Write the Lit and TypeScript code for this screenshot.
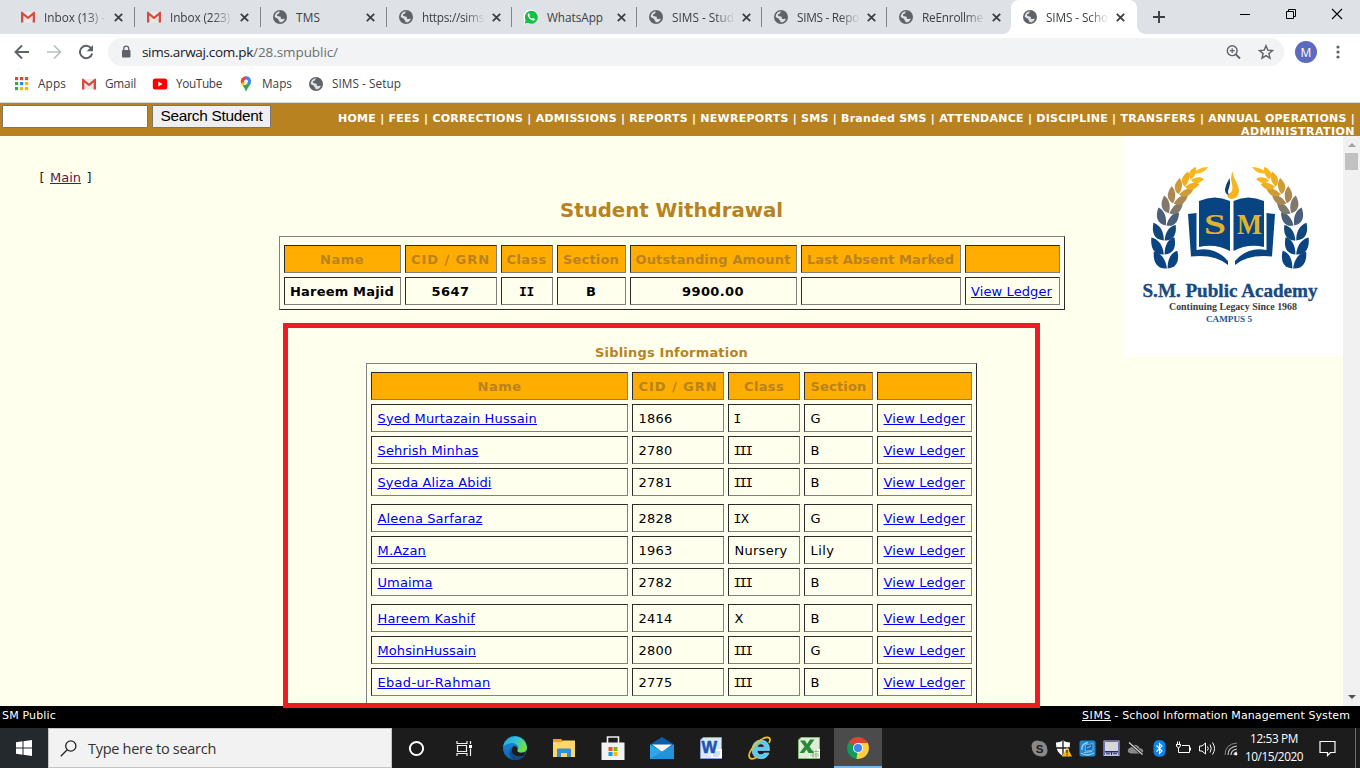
import { LitElement, html, svg, css } from "lit";
import { customElement, property } from "lit/decorators.js";

/** Text run whose tracking is adjusted so that it fills a given width. */
@customElement("fit-text")
class FitText extends LitElement {
  @property({ type: Number }) w = 0;
  static styles = css`
    :host { display: inline-block; white-space: pre; text-decoration: inherit; }
  `;
  render() { return html`<slot></slot>`; }
  firstUpdated() {
    const n = (this.textContent || "").length;
    const cur = this.getBoundingClientRect().width;
    if (n && cur && this.w) this.style.letterSpacing = `${(this.w - cur) / n}px`;
  }
}

const fit = (text: string, w: number) => html`<fit-text .w=${w}>${text}</fit-text>`;

const icon = (w: number, h: number, vb: string, body: unknown) =>
  html`<svg width=${w} height=${h} viewBox=${vb} fill="none">${body}</svg>`;

const globe = () => icon(16, 16, "0 0 16 16", svg`
  <circle cx="8" cy="8" r="7" fill="#5f6368"/>
  <path d="M8.6 2.3C7 3 7.600 4.200 6.500 4.800C5.500 5.300 4.700 5.200 5 6.500C5.200 7.500 7.600 7 8.500 7.800C9.300 8.500 8.300 9.400 9.300 9.900C10.500 10.400 11.300 9.300 12.800 9.900A5.300 5.300 0 0 1 7.400 13.300C8 12 6.500 11.600 6.300 10.600C6 9.300 4.300 9.200 2.700 8A5.400 5.400 0 0 1 8.600 2.300Z" fill="#dee1e6"/>`);

const gmail = () => icon(16, 16, "0 0 16 16", svg`
  <path d="M2 3H14V13.500H2Z" fill="#eceae8"/>
  <path d="M2 13.500L6.500 9M14 13.500L9.500 9" stroke="#cfcdcb" stroke-width=".8"/>
  <path d="M1 3.200Q1 2.500 1.900 2.500L8 7.500L14.100 2.500Q15 2.500 15 3.200V13.500H12.700V6.400L8 10.200L3.300 6.400V13.500H1Z" fill="#d54b3d"/>`);

const whatsapp = () => icon(16, 16, "0 0 16 16", svg`
  <path d="M.6 15.700L1.400 11.500A7.300 7.300 0 1 1 5 14.600Z" fill="#fff"/>
  <path d="M1.600 14.800L2.600 11.300A6.500 6.500 0 1 1 5 13.800Z" fill="#12c143"/>
  <path d="M5.500 4.300Q4 5.500 5 7.500Q6.800 11 10 11.700Q11.700 11.500 12 10L10 8.800L9.100 9.800Q7.200 9 6.300 7.100L7 6.200L6.300 4.400Z" fill="#fff"/>`);

const close = () => icon(9, 9, "0 0 9 9", svg`<path d="M.8.8L8.200 8.200M8.200.8L.8 8.200" stroke="#3c4043" stroke-width="1.8"/>`);

const TABS = [
  { ic: gmail, t: "Inbox (13) -", w: 61 },
  { ic: gmail, t: "Inbox (223)", w: 60 },
  { ic: globe, t: "TMS", w: 24 },
  { ic: globe, t: "https://sims", w: 62 },
  { ic: whatsapp, t: "WhatsApp", w: 56 },
  { ic: globe, t: "SIMS - Stud", w: 62 },
  { ic: globe, t: "SIMS - Repo", w: 62 },
  { ic: globe, t: "ReEnrollme", w: 61 },
  { ic: globe, t: "SIMS - Scho", w: 62 },
];

const SUMMARY = [
  ["Name", 44, "Hareem Majid", 104],
  ["CID / GRN", 79, "5647", 38],
  ["Class", 40, "II", 15],
  ["Section", 56, "B", 10],
  ["Outstanding Amount", 155, "9900.00", 62],
  ["Last Absent Marked", 147, "", 0],
] as [string, number, string, number][];

type Row = [string, number, string, string, number, string, number];
const SIBLINGS: Row[][] = [
  [
    ["Syed Murtazain Hussain", 159.500, "1866", "I", 5.5, "G", 10],
    ["Sehrish Minhas", 101, "2780", "III", 17.5, "B", 9],
    ["Syeda Aliza Abidi", 114, "2781", "III", 17.5, "B", 9],
  ],
  [
    ["Aleena Sarfaraz", 105, "2828", "IX", 15, "G", 10],
    ["M.Azan", 48.5, "1963", "Nursery", 53, "Lily", 24],
    ["Umaima", 55, "2782", "III", 17.5, "B", 9],
  ],
  [
    ["Hareem Kashif", 97.500, "2414", "X", 9, "B", 9],
    ["MohsinHussain", 98.500, "2800", "III", 17.5, "G", 10],
    ["Ebad-ur-Rahman", 113, "2775", "III", 17.5, "B", 9],
  ],
];

const isRoman = (s: string) => /^I[IX]*$/.test(s);

/* Laurel leaf pairs: base x, base y, rotation, scale, colour */
const LEAVES: [number, number, number, number, string][] = [
  [44, 132, -4, 1, "#0b4480"],
  [41, 118, -3, 0.98, "#0b4480"],
  [41, 104, 3, 0.95, "#12477c"],
  [43, 89, 11, 0.9, "#4c5f7a"],
  [46, 77, 19, 0.86, "#81796c"],
  [50.500, 67, 28, 0.8, "#a98853"],
  [56, 58, 37, 0.76, "#cf9b35"],
  [62, 50.500, 46, 0.72, "#efad20"],
  [68, 43.500, 54, 0.64, "#fab71c"],
];

const laurel = () => svg`${LEAVES.map(([x, y, r, s, c]) => svg`
  <g transform="translate(${x} ${y}) rotate(${r}) scale(${s})" fill=${c}>
    <path d="M-.2 .5C-11 .5 -13.500 -8 -12 -17.500C-5 -15.500 -.5 -9 -.2 .5Z"/>
    <path d="M.6 .5C10.500 .5 13 -7.500 11.500 -16.500C5 -15 1 -9 .6 .5Z"/>
  </g>`)}<path d="M71 37.500Q74 31.500 85 31Q80 38.500 71 37.500Z" fill="#fcbb20"/>`;

const crest = () => html`<svg class="crest" width="220" height="220" viewBox="0 0 220 220">
  <rect width="220" height="220" fill="#fff"/>
  <g>${laurel()}</g>
  <g transform="translate(214 0) scale(-1 1)">${laurel()}</g>
  <path d="M109.500 35C110 43 116 48 116 55Q115 63 108 63Q103 62 105 58Q111 56 109 48Q107 42 109.500 35Z" fill="#f8b41d"/>
  <path d="M106.500 42Q108 47 106 52Q104 56 106 59Q101.500 58 102 53Q103 48 106.500 42Z" fill="#123f76"/>
  <g fill="#084482">
    <path d="M76 65Q92 58 107 65V115Q92 107 76 111Z"/>
    <path d="M110.500 65Q125 58 141 65V111Q125 107 110.500 115Z"/>
    <path d="M65 78L73.500 77V114Q92 110 105 125V129Q92 118 68 120.500Z"/>
    <path d="M152 78L143.500 77V114Q125 110 112 125V129Q125 118 149 120.500Z"/>
  </g>
  <g class="crest-text">
    <text x="81" y="98" font-size="29" textLength="22" lengthAdjust="spacingAndGlyphs" fill="#e2b22e">S</text>
    <text x="114" y="98" font-size="29" textLength="25" lengthAdjust="spacingAndGlyphs" fill="#e2b22e">M</text>
    <text x="19.500" y="160.500" font-size="19" textLength="175" lengthAdjust="spacingAndGlyphs" fill="#174a80" stroke="#174a80" stroke-width=".35">S.M. Public Academy</text>
    <text x="46" y="173.700" font-size="9.500" textLength="128" lengthAdjust="spacingAndGlyphs" fill="#3a3a3c">Continuing Legacy Since 1968</text>
    <text x="83" y="186.200" font-size="8.500" textLength="46" lengthAdjust="spacingAndGlyphs" fill="#1e568c">CAMPUS 5</text>
  </g>
</svg>`;

const APPS = [
  icon(24, 24, "0 0 24 24", svg`
    <defs>
      <linearGradient id="ea" x1="0" y1="0" x2="1" y2=".5"><stop offset="0" stop-color="#1b9de2"/><stop offset=".5" stop-color="#33c3d8"/><stop offset="1" stop-color="#6fe23f"/></linearGradient>
      <linearGradient id="eb" x1="0" y1="0" x2="0" y2="1"><stop offset="0" stop-color="#1b8fdc"/><stop offset="1" stop-color="#0f62b4"/></linearGradient>
    </defs>
    <circle cx="12" cy="12" r="12" fill="url(#eb)"/>
    <path d="M.2 10.500A12 12 0 0 1 24 11.500C24 15 21 16.700 18 16.700Q14 16.500 14.300 14.600Q15.800 13 15.300 10.800Q13.500 7 9 7Q3 7.200.2 10.500Z" fill="url(#ea)"/>
    <path d="M14.300 14.600Q14 16.500 18 16.700Q21 16.700 23 15.200Q22.500 17.500 20.500 20Q13 22 9.500 17.500Q7.500 13.500 10.500 10Q15 10 14.300 14.600Z" fill="#1c1c1c"/>
    <path d="M8.800 11Q7.500 18 13 20.500Q17 22 20.500 20A12 12 0 0 1 11 24Q3.500 20 8.800 11Z" fill="#114a8b"/>`),
  icon(22, 20, "0 0 22 20", svg`
    <path d="M0 1H8L10 3H22V19H0Z" fill="#e9a50c"/><path d="M0 4H8.500L10 2.500H22V19H0Z" fill="#ffd767"/>
    <path d="M4 19V11.500Q4 10.500 5 10.500H17Q18 10.500 18 11.500V19H14V15H8V19Z" fill="#2f8fd8"/>`),
  icon(24, 24, "0 0 24 24", svg`
    <path d="M6.500 7V1H17.500V7" stroke="#eee" stroke-width="1.600"/><path d="M.5 6.500H23.500V24H.5Z" fill="#f2f2f2"/>
    <path d="M7.500 11H11.500V15H7.500Z" fill="#f25022"/><path d="M12.500 11H16.500V15H12.500Z" fill="#7fba00"/>
    <path d="M7.500 16H11.500V20H7.500Z" fill="#00a4ef"/><path d="M12.500 16H16.500V20H12.500Z" fill="#ffb900"/>`),
  icon(24, 24, "0 0 24 24", svg`
    <path d="M0 8.500L12 1L24 8.500V14H0Z" fill="#0b5cab"/>
    <path d="M0 8.500L12 15.500L24 8.500V23H0Z" fill="#29a9ea"/><path d="M0 23L12 15.500L24 8.500V23Z" fill="#1e93e0"/><path d="M2 8.500H22L13 15Q12 15.600 11 15Z" fill="#f6f6f6"/>`),
  icon(22, 22, "0 0 22 22", svg`
    <path d="M3 .5H21.500V21.500H.5V3Z" fill="#dce8f8" stroke="#7fa3d6"/><path d="M17 12H22V21H11V17Z" fill="#fff"/>
    <path d="M13 15H20M13 17H20M13 19H19" stroke="#8eaddb" stroke-width=".8"/>
    <text x="1.500" y="15.500" font-family="Liberation Sans" font-weight="700" font-size="16.500" fill="#1e52b0" stroke="#1e52b0" stroke-width=".5">W</text>`),
  icon(24, 24, "0 0 24 24", svg`
    <path d="M21.500 14.500H9Q9.500 18.700 13 18.700Q15.200 18.700 16.200 17H21Q19 22.700 13 22.700Q4 22.500 4 13.500Q4.500 4.500 13 4Q21.800 4.500 21.500 14.500ZM9.200 11.200H16.600Q16 7.800 13 7.800Q9.800 7.800 9.200 11.200Z" fill="#5cc9f5" stroke="#a7e4fb" stroke-width=".6"/>
    <path d="M21 7Q23.500 2 20 1.500Q14 1 6 10Q-1 18.500 2 22Q4 24 9 21" stroke="#f0c11c" stroke-width="1.800"/>`),
  icon(22, 22, "0 0 22 22", svg`
    <path d="M3 .5H21.500V21.500H.5V3Z" fill="#dcedd8" stroke="#85b878"/><path d="M11 12H22V21H11Z" fill="#fff"/>
    <path d="M12 14.500H21M12 17H21M12 19H21M15 12V21M18 12V21" stroke="#6aa95c" stroke-width=".7"/>
    <path d="M2 3.500H7L9 7L12 2.500H16.500L11.500 9.500L16 16H10.500L8.500 12.500L6 16H1.500L6.500 9.500Z" fill="#2b8a35"/>`),
];

const chrome = icon(22, 22, "0 0 22 22", svg`
  <path d="M11 11L1.500 5.500A11 11 0 0 1 20.500 5.500Z" fill="#db4437"/>
  <path d="M11 11L20.500 5.500A11 11 0 0 1 11 22Z" fill="#ffcd40"/>
  <path d="M11 11L11 22A11 11 0 0 1 1.500 5.500Z" fill="#0f9d58"/>
  <path d="M11 6H20.600L21 7.500L11 11Z" fill="#ffcd40"/>
  <path d="M11 5.500H20.500L20 4.600L11 3Z" fill="#db4437"/><path d="M15.400 13.500L11 22L9.500 21.900L11 11Z" fill="#ffcd40"/>
  <circle cx="11" cy="11" r="5.100" fill="#f4f4f4"/><circle cx="11" cy="11" r="4" fill="#4285f4"/>`);

const TRAY = [
  icon(17, 17, "0 0 17 17", svg`<rect x=".5" y=".5" width="11" height="11" rx="5.500" fill="#888"/><rect x="5" y="5" width="11.500" height="11.500" rx="5.500" fill="#888"/><circle cx="8.500" cy="8.500" r="7.500" fill="#888"/>
    <text x="4.800" y="12.600" font-family="Liberation Sans" font-weight="700" font-size="11.500" fill="#1c1c1c">S</text>`),
  icon(17, 17, "0 0 17 17", svg`<path d="M8 .5Q11 2.500 15 2.500Q15.500 12 8 16Q.5 12 1 2.500Q5 2.500 8 .5Z" fill="#fff"/><path d="M8 1V15M1 8H15" stroke="#1c1c1c" stroke-width="1.300"/>
    <path d="M12 7L17 16.500H7Z" fill="#fbb917"/><path d="M12 10V13.300M12 14.300V15.500" stroke="#222" stroke-width="1.200"/>`),
  icon(17, 17, "0 0 17 17", svg`<rect x=".5" y=".5" width="16" height="16" rx="2" fill="#1f86cf"/><path d="M3 10Q2 4 9 2.500M2 13Q8 17 15 13" stroke="#8fd3f7" stroke-width="1.400"/><path d="M6.500 5L14 3.500V10L6.500 11Z" fill="#1668ae" stroke="#8fc9ea" stroke-width=".7"/><path d="M5 12.500L13 11.500M8 8L12 6" stroke="#b5dcf2" stroke-width=".8"/>`),
  icon(17, 17, "0 0 17 17", svg`<rect x="1" y="1" width="15" height="14.500" fill="#23257a" stroke="#bfc0dc"/><path d="M2 2H15V11H2Z" fill="#d5d7dd"/><path d="M2 12.500H8V15H2ZM9 12.500H15V15H9Z" fill="#c9cad8"/><path d="M3 13.200H7V14.200H3ZM10 13.200H14V14.200H10Z" fill="#23257a"/>`),
  icon(17, 17, "0 0 17 17", svg`<path d="M4 13.500Q.5 13 .8 10Q1.500 7.500 4 7.500Q5.500 4 9 5Q12 5.500 12.500 8Q16 8.500 16.300 11Q16 13.500 13.500 13.500Z" fill="#8a8a8a"/><path d="M2 2.500L15.500 14.500" stroke="#1c1c1c" stroke-width="3"/><path d="M2 2.500L15.500 14.500" stroke="#ddd" stroke-width="1.100"/>`),
  icon(17, 17, "0 0 17 17", svg`<rect x="2.500" y=".3" width="12" height="16.500" rx="5" fill="#0a84ea"/><path d="M5.500 5.500L11 11L8.500 13.500V3.500L11 6L5.500 11.500" stroke="#fff" stroke-width="1.100"/>`),
  icon(17, 17, "0 0 17 17", svg`<path d="M7 5.500H14.500V12.500H3.500V8M15.500 7.500V10.500" stroke="#fff"/><path d="M2.500 1.500V4M4.500 1.500V4M1 4.500H6M1.500 5V6Q2 7.500 3.500 7.500Q5.500 7.500 5.500 5" stroke="#fff"/>`),
  icon(17, 17, "0 0 17 17", svg`<path d="M.5 6V11H3L6.500 14V3L3 6Z" stroke="#fff"/><path d="M8.500 6.500Q10 8.500 8.500 10.500M11 4.500Q13.500 8.500 11 12.500M13.500 2.500Q17.500 8.500 13.500 14.500" stroke="#fff"/>`),
  icon(17, 17, "0 0 17 17", svg`<path d="M2 15Q2 4 14 3" stroke="#888"/><path d="M5 15Q5 7 14 6M8 15Q8 10 14 9M11 15Q11 12.500 14 12" stroke="#ccc" stroke-width="1.200"/><circle cx="13" cy="14" r="1.400" fill="#fff"/>`),
];

@customElement("app-root")
class AppRoot extends LitElement {
  static styles = css`
    :host { display: block; width: 1360px; height: 768px; overflow: hidden; position: relative; background: #fff; }
    * { box-sizing: border-box; }
    svg { display: block; flex: none; }
    a { color: #0000ee; text-decoration: underline; }
    .screen { display: grid; grid-template-rows: 34px 36px 33px 33px 570px 22px 40px; height: 768px; }
    .ui { font-family: "Open Sans", "Noto Sans", sans-serif; font-size: 11.8px; color: #3c4043; }

    .tabs { display: flex; background: #dee1e6; padding-left: 9px; }
    .tab { width: 125px; height: 34px; display: grid; grid-template-columns: 16px 63px 9px; column-gap: 8px; justify-content: start; align-items: center; padding-left: 11px; background: linear-gradient(#80868b, #80868b) right 7px / 1px 20px no-repeat; flex: none; }
    .tab.wide { width: 126px; }
    .tab.plain { background: none; }
    .tab.active { position: relative; background: #fff; border-radius: 8px 8px 0 0; margin-left: -1px; padding-left: 11px; width: 126px; }
    .tab.active::before, .tab.active::after { content: ""; position: absolute; bottom: 0; width: 8px; height: 8px; }
    .tab.active::before { left: -8px; background: radial-gradient(circle at 0 0, transparent 7.5px, #fff 8px); }
    .tab.active::after { right: -8px; background: radial-gradient(circle at 100% 0, transparent 7.5px, #fff 8px); }
    .title { white-space: nowrap; line-height: 18px; margin-top: -1px; }
    .title.fade { -webkit-mask-image: linear-gradient(90deg, #000 68%, transparent 100%); mask-image: linear-gradient(90deg, #000 68%, transparent 100%); }
    .tab .x { margin-left: -1px; }
    .plus { padding: 11px 0 0 16px; width: 102px; }
    .win { display: flex; justify-content: space-between; width: 104px; padding-top: 8px; }

    .toolbar { display: flex; align-items: center; padding: 0 15px 0 14px; }
    .toolbar .nav { display: flex; gap: 16px; width: 94px; }
    .omni { height: 28px; width: 1176px; border-radius: 14px; background: #f1f3f4; display: flex; align-items: center; padding: 0 10px 0 12px; }
    .url { font-size: 13.5px; color: #6b7075; margin-left: 10px; flex: 1; line-height: 20px; }
    .url b { font-weight: 400; color: #202124; }
    .omni .right { display: flex; gap: 17px; }
    .omni .right svg:first-child { margin-right: 0; }
    .avatar { width: 22px; height: 22px; border-radius: 50%; background: #5c6bc0; color: #fff; font-size: 12px; display: flex; align-items: center; justify-content: center; margin: 0 19px 0 11px; flex: none; }

    .marks { display: flex; align-items: center; padding: 0 0 5px 14px; border-bottom: 1px solid #d6d9d6; }
    .mark { display: flex; align-items: center; gap: 8px; margin-right: 16px; }
    .mark:first-child { gap: 9px; margin-right: 15px; }
    .mark fit-text { margin-top: -1px; }

    .head { display: flex; background: #b98221; padding: 2px 5px 0 2px; gap: 4px; }
    .field { width: 146px; height: 23px; border: 1px solid #767676; background: #fff; border-radius: 1px; }
    .btn { width: 119px; height: 23px; border: 1px solid #767676; border-radius: 1px; background: #efefef; font-family: "Liberation Sans", Arial, sans-serif; font-size: 15.4px; line-height: 20px; text-align: center; color: #000; white-space: nowrap; }
    .menu { flex: 1; display: flex; flex-direction: column; align-items: flex-end; padding-top: 7px; color: #fff; font: bold 11px/13px "DejaVu Sans", Verdana, sans-serif; }

    .page { display: grid; grid-template-columns: 1343px 17px; overflow: hidden; background: #ffffee; font: 13px/16px "DejaVu Sans", Verdana, sans-serif; color: #000; }
    .content, .badge { grid-area: 1 / 1; }
    .badge { justify-self: end; }
    .crest-text { font-family: "Liberation Serif", serif; font-weight: 700; }
    .content { display: flex; flex-direction: column; align-items: center; height: 570px; overflow: hidden; }
    .crumb { align-self: flex-start; padding: 34px 0 0 39.500px; color: #222; word-spacing: 1.3px; }
    .crumb a { color: #551a4b; }
    .gold { color: #b98221; font-weight: 700; margin: 0; }
    h1.gold { font-size: 19.8px; line-height: 26px; margin-top: 12px; }
    h2.gold { font-size: 13px; line-height: 16px; margin-top: 35px; }
    .table { border: 1px solid; border-color: #808080 #2b2b2b #2b2b2b #808080; padding: 8px 4px 4px; display: grid; row-gap: 4px; flex: none; }
    .summary { margin-top: 12px; width: 786px; height: 74px; }
    .siblings { margin-top: 2px; width: 611px; height: 380px; align-content: start; }
    .row { display: grid; column-gap: 4px; height: 28px; }
    .summary .row { grid-template-columns: 117px 92px 52px 69px 167px 160px 95px; }
    .siblings .row { grid-template-columns: 257px 92px 72px 69px 95px; }
    .siblings .row.first { margin-top: 4px; }
    .cell { border: 1px solid; border-color: #2b2b2b #808080 #808080 #2b2b2b; padding: 1px 5px 0 5.500px; display: flex; align-items: center; white-space: nowrap; }
    .cell.th { background: #ffad00; color: #b98221; font-weight: 700; justify-content: center; padding: 2px 0 0; }
    .cell.mid { font-weight: 700; justify-content: center; padding: 1px 0 0; }
    .cell.roman { font-family: "DejaVu Sans Mono", monospace; padding-left: 4.5px; }
    .cell.mid.roman { padding-left: 0; }
    .scroll { background: #f1f1f1; display: flex; flex-direction: column; align-items: center; }
    .scroll .up { padding: 7px 0 6px; }
    .thumb { width: 13px; height: 17px; background: #c1c1c1; }
    .scroll .down { margin-top: auto; padding-bottom: 7px; }

    .foot { background: #000; color: #fff; display: flex; justify-content: space-between; padding: 3px 10px 0 2px; font: 11px/13px "DejaVu Sans", Verdana, sans-serif; }
    .foot a { color: #fff; }

    .task { display: flex; background: #1c1c1c; color: #fff; }
    .start { width: 48px; display: grid; place-items: center; background: #23292d; }
    .find { width: 344px; background: #f2f2f2; border: 1px solid #c4c4c4; display: flex; align-items: center; padding-left: 11px; gap: 11px; font-size: 14.500px; color: #333; }
    .slot { width: 48px; display: grid; place-items: center; flex: none; }
    .apps { display: flex; margin-left: 2px; }
    .apps .slot { width: 49px; }
    .apps .slot.on { width: 48px; margin-left: 1px; background: #4b4b4b; border-bottom: 2px solid #76b9ed; padding-top: 1px; }
    .tray { display: flex; margin-left: 145px; }
    .tray .slot { width: 24px; }
    .clock { width: 60px; margin-left: 1px; display: flex; flex-direction: column; align-items: center; font-size: 11.8px; line-height: 18px; padding-top: 1px; color: #fff; }
    .note { display: grid; place-items: center; width: 52px; border-right: 1px solid #6b6b6b; padding-right: 5px; }

    .mark-box { position: absolute; left: 283px; top: 323px; width: 757px; height: 385px; border: 5px solid #ed1c24; }
  `;

  render() {
    return html`
      <div class="screen">
        <div class="tabs ui">
          ${TABS.map((t, i) => html`
            <div class="tab ${i < 3 ? "wide" : i === 8 ? "active" : i === 7 ? "plain" : ""}">
              ${t.ic()}
              <div class="title ${t.t.length > 9 ? "fade" : ""}">${fit(t.t, t.w)}</div>
              <div class="x">${close()}</div>
            </div>`)}
          <div class="plus">${icon(12, 12, "0 0 12 12", svg`<path d="M6 0V12M0 6H12" stroke="#3c4043" stroke-width="1.900"/>`)}</div>
          <div class="win">
            ${icon(12, 12, "0 0 12 12", svg`<path d="M1 6.500H11" stroke="#000"/>`)}
            ${icon(12, 12, "0 0 12 12", svg`<path d="M1.500 3.500H8.500V10.500H1.500ZM3.500 3V1.500H10.500V8.500H9" stroke="#000"/>`)}
            ${icon(12, 12, "0 0 12 12", svg`<path d="M1 1L11 11M11 1L1 11" stroke="#000" stroke-width="1.100"/>`)}
          </div>
        </div>

        <div class="toolbar ui">
          <div class="nav">
            ${icon(16, 16, "0 0 16 16", svg`<path d="M15 8H2M8 1.500L1.500 8L8 14.500" stroke="#5f6368" stroke-width="1.900"/>`)}
            ${icon(16, 16, "0 0 16 16", svg`<path d="M1 8H14M8 1.500L14.500 8L8 14.500" stroke="#bcbfc2" stroke-width="1.700"/>`)}
            ${icon(16, 16, "0 0 16 16", svg`<path d="M13.300 4.500A6.200 6.200 0 1 0 14.200 9.500" stroke="#5f6368" stroke-width="2"/><path d="M15 1V7.300H8.700Z" fill="#5f6368"/>`)}
          </div>
          <div class="omni">
            ${icon(12, 14, "0 0 12 14", svg`<rect x="2" y="5" width="8.500" height="7.500" rx="1" fill="#5f6368"/><path d="M3.800 5.500V3.500A2.450 2.450 0 0 1 8.700 3.500V5.500" stroke="#5f6368" stroke-width="1.300"/>`)}
            <div class="url"><b>${fit("sims.arwaj.com.pk", 111)}</b>${fit("/28.smpublic/", 85)}</div>
            <div class="right">
              ${icon(16, 16, "0 0 16 16", svg`<circle cx="7.200" cy="6.700" r="4.900" stroke="#5f6368" stroke-width="1.400"/><path d="M10.800 10.300L15 14.500" stroke="#5f6368" stroke-width="1.900"/><path d="M4.800 6.700H9.600M7.200 4.300V9.100" stroke="#5f6368" stroke-width="1.200"/>`)}
              ${icon(16, 16, "0 0 16 16", svg`<path d="M8 1.700L9.800 6.100L14.500 6.500L10.900 9.600L12 14.200L8 11.700L4 14.200L5.100 9.600L1.500 6.500L6.200 6.100Z" stroke="#5f6368" stroke-width="1.400"/>`)}
            </div>
          </div>
          <div class="avatar">M</div>
          ${icon(4, 14, "0 0 4 14", svg`<circle cx="2" cy="2" r="1.600" fill="#5f6368"/><circle cx="2" cy="7" r="1.600" fill="#5f6368"/><circle cx="2" cy="12" r="1.600" fill="#5f6368"/>`)}
        </div>

        <div class="marks ui">
          <div class="mark">
            ${icon(15, 15, "0 0 15 15", svg`
              ${["#ea4335", "#ea4335", "#ea4335", "#34a853", "#1a8cff", "#fbb305", "#34a853", "#fbb305", "#fbb305"].map((c, i) =>
                svg`<rect x=${1 + (i % 3) * 5} y=${1 + Math.floor(i / 3) * 5} width="3.200" height="3.200" fill=${c}/>`)}`)}
            ${fit("Apps", 28)}
          </div>
          <div class="mark">${gmail()}${fit("Gmail", 31)}</div>
          <div class="mark">
            ${icon(16, 16, "0 0 16 16", svg`<rect x=".8" y="2.500" width="14.400" height="11" rx="2.600" fill="#f00"/><path d="M6.300 5.600V10.400L10.500 8Z" fill="#fff"/>`)}
            ${fit("YouTube", 46)}
          </div>
          <div class="mark">
            ${icon(16, 16, "0 0 16 16", svg`
              <path d="M8 15.800Q7 12 4.500 9.500L8 8.500L13 6Q12.800 8.500 10.700 10.700Q9 13 8 15.800Z" fill="#34a853"/>
              <path d="M3.200 7.500Q2 4 4 2L8 6L4.700 10Q3.600 8.700 3.200 7.500Z" fill="#fbbc04"/>
              <path d="M4 2.200Q5.500.3 8 .3L9 4L3.200 7.300Q2.200 4.500 4 2.200Z" fill="#ea4335"/>
              <path d="M7.500.3Q12 0 13 4.200Q13.300 6.500 12 8.500L8 7Z" fill="#4285f4"/><circle cx="8" cy="5.300" r="1.900" fill="#fff"/>`)}
            ${fit("Maps", 30)}
          </div>
          <div class="mark">${globe()}${fit("SIMS - Setup", 69)}</div>
        </div>

        <div class="head">
          <div class="field"></div>
          <div class="btn">${fit("Search Student", 102)}</div>
          <div class="menu">
            ${fit("HOME | FEES | CORRECTIONS | ADMISSIONS | REPORTS | NEWREPORTS | SMS | Branded SMS | ATTENDANCE | DISCIPLINE | TRANSFERS | ANNUAL OPERATIONS |", 1017)}
            ${fit("ADMINISTRATION", 114)}
          </div>
        </div>

        <div class="page">
          <div class="content">
            <div class="crumb">[ <a>${fit("Main", 31)}</a> ]</div>
            <h1 class="gold">${fit("Student Withdrawal", 223)}</h1>
            <div class="table summary">
              <div class="row">${SUMMARY.map(([h, w]) => html`<div class="cell th">${fit(h, w)}</div>`)}<div class="cell th"></div></div>
              <div class="row">${SUMMARY.map(([, , v, w]) => html`<div class="cell mid ${isRoman(v) ? "roman" : ""}">${v ? fit(v, w) : ""}</div>`)}<div class="cell"><a>${fit("View Ledger", 81)}</a></div></div>
            </div>
            <h2 class="gold">${fit("Siblings Information", 153)}</h2>
            <div class="table siblings">
              <div class="row">
                ${([["Name", 44], ["CID / GRN", 79], ["Class", 40], ["Section", 56]] as [string, number][]).map(([h, w]) => html`<div class="cell th">${fit(h, w)}</div>`)}
                <div class="cell th"></div>
              </div>
              ${SIBLINGS.map((g, gi) => g.map((r, i) => html`
                <div class="row ${gi && !i ? "first" : ""}">
                  <div class="cell"><a>${fit(r[0], r[1])}</a></div>
                  <div class="cell">${fit(r[2], 34)}</div>
                  <div class="cell ${isRoman(r[3]) ? "roman" : ""}">${fit(r[3], r[4])}</div>
                  <div class="cell">${fit(r[5], r[6])}</div>
                  <div class="cell"><a>${fit("View Ledger", 81.5)}</a></div>
                </div>`))}
            </div>
          </div>
          <div class="badge">${crest()}</div>
          <div class="scroll">
            <div class="up">${icon(8, 4, "0 0 8 4", svg`<path d="M4 0L8 4H0Z" fill="#a3a3a3"/>`)}</div>
            <div class="thumb"></div>
            <div class="down">${icon(8, 4, "0 0 8 4", svg`<path d="M4 4L8 0H0Z" fill="#505050"/>`)}</div>
          </div>
        </div>

        <div class="foot">
          ${fit("SM Public", 54)}
          <div><a>${fit("SIMS", 29)}</a>${fit(" - School Information Management System", 239)}</div>
        </div>

        <div class="task ui">
          <div class="start">${icon(16, 16, "0 0 16 16", svg`<path d="M0 2.200L6.500 1.300V7.500H0ZM7.500 1.200L16 0V7.500H7.500ZM0 8.500H6.500V14.700L0 13.800ZM7.500 8.500H16V16L7.500 14.800Z" fill="#fff"/>`)}</div>
          <div class="find">
            ${icon(17, 17, "0 0 17 17", svg`<circle cx="10.800" cy="6" r="5.100" stroke="#222" stroke-width="1.300"/><path d="M7.200 9.700L.8 16.200" stroke="#222" stroke-width="1.300"/>`)}
            ${fit("Type here to search", 128)}
          </div>
          <div class="slot">${icon(17, 17, "0 0 17 17", svg`<circle cx="8.500" cy="8.500" r="6.600" stroke="#fff" stroke-width="2"/>`)}</div>
          <div class="slot">${icon(17, 17, "0 0 17 17", svg`<path d="M1 1V3.500H11V1M1 16V13.500H11V16M1.500 5.500H10.500V11.500H1.500ZM14.500 1V4M14.500 8.500V16" stroke="#eee" stroke-width="1.200"/><path d="M13 5H16V8H13Z" fill="#fff"/>`)}</div>
          <div class="apps">
            ${APPS.map((a) => html`<div class="slot">${a}</div>`)}
            <div class="slot on">${chrome}</div>
          </div>
          <div class="tray">${TRAY.map((a) => html`<div class="slot">${a}</div>`)}</div>
          <div class="clock">${fit("12:53 PM", 48)}${fit("10/15/2020", 58)}</div>
          <div class="note">${icon(17, 17, "0 0 17 17", svg`<path d="M1 1.500H16V12.500H11.500L8.500 15.500V12.500H1Z" stroke="#fff" stroke-width="1.200"/>`)}</div>
        </div>
      </div>
      <div class="mark-box"></div>`;
  }
}
